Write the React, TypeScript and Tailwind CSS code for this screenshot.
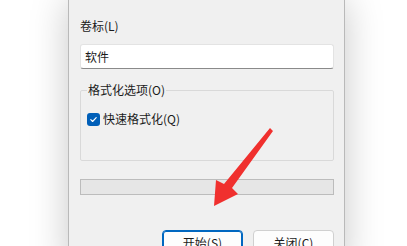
export default function App() {
    return (
        <div className="relative w-[407px] h-[246px] overflow-hidden bg-white font-['Segoe_UI','Noto_Sans_CJK_SC',sans-serif] text-[12px] leading-[16px] text-[#1b1b1b]">
            <div className="ml-[68px] w-[277px] h-[270px] bg-[#f0f0f0] border-x border-[#b9b9b9] shadow-[0_0_36px_rgba(0,0,0,0.22)] pl-[11px] pr-[10px] pt-[18px]">
                <div>卷标(L)</div>
                <div className="mt-[10px] h-[25px] bg-white border border-[#e3e3e3] border-b-[#8a8a8a] rounded-[3px] px-[4px] flex items-center">
                    软件
                </div>

                <fieldset className="mt-[13px] border border-[#d9d9d9] rounded-[2px] px-[6px] pb-[33px]">
                    <legend className="px-[1px]">格式化选项(O)</legend>
                    <label className="mt-[13px] flex items-center gap-[3px]">
                        <span className="w-[13px] h-[13px] rounded-[3px] bg-[#005fb8] flex items-center justify-center">
                            <svg width="9" height="9" viewBox="0 0 10 10" fill="none">
                                <path d="M2 5.2l2 2L8 3" stroke="white" strokeWidth="1.3" strokeLinecap="round" strokeLinejoin="round" />
                            </svg>
                        </span>
                        <span>快速格式化(Q)</span>
                    </label>
                </fieldset>

                <div className="mt-[18px] h-[16px] bg-[#e6e6e6] border border-[#bcbcbc]" />

                <div className="mt-[35px] flex justify-end gap-[10px]">
                    <button type="button" className="w-[81px] h-[26px] bg-[#fdfdfd] border border-[#0067c0] rounded-[4px] shadow-[inset_0_0_0_1px_#0067c0]">
                        开始(S)
                    </button>
                    <button type="button" className="w-[81px] h-[26px] bg-[#fdfdfd] border border-[#d0d0d0] rounded-[4px]">
                        关闭(C)
                    </button>
                </div>
            </div>

            {/* red pointer arrow */}
            <svg className="absolute left-0 top-0 pointer-events-none" width="407" height="246" viewBox="0 0 407 246">
                <polygon
                    points="270,128 273,131 232,188 238,194 214,206 216,180 224,184"
                    fill="#f0302e"
                />
            </svg>
        </div>
    );
}
